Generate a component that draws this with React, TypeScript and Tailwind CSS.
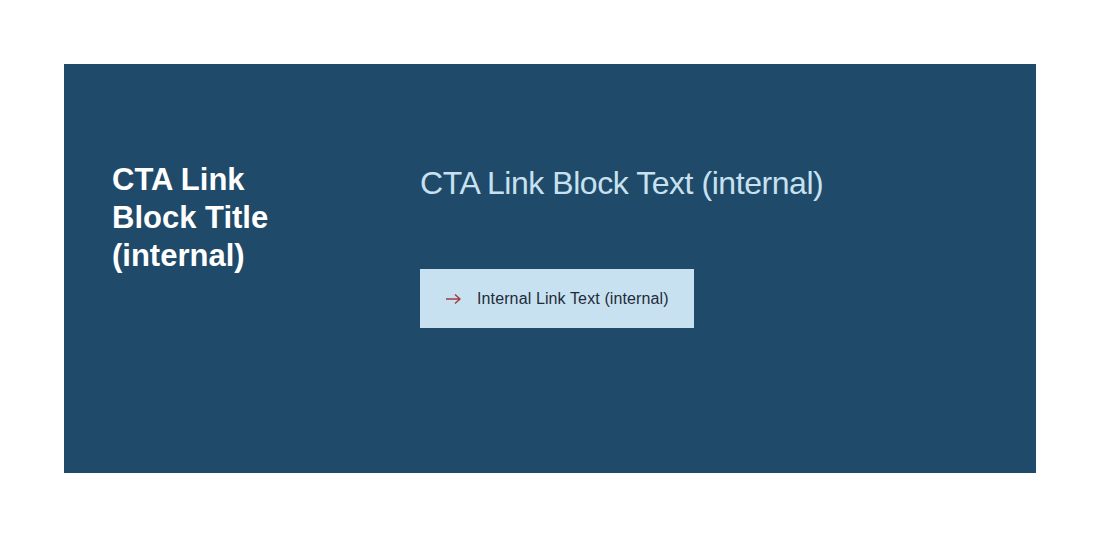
import React from "react";

export default function App() {
  return (
    <div className="w-[1100px] h-[537px] bg-white pt-[64px] pl-[64px]" style={{ fontFamily: '"Liberation Sans", Arial, sans-serif' }}>
      <div className="w-[972px] h-[409px] bg-[#1f4a69] flex pl-[48px] pt-[97px]">
        <div className="w-[308px] shrink-0">
          <h2 className="text-[31px] leading-[38px] font-bold text-white w-[200px]">
            CTA Link Block Title (internal)
          </h2>
        </div>
        <div className="flex flex-col">
          <p className="text-[32px] leading-[40px] text-[#c8e1f0] tracking-[-0.45px] mt-[2px]">
            CTA Link Block Text (internal)
          </p>
          <a href="#" className="mt-[66px] w-[274px] h-[59px] bg-[#c8e1f0] flex items-center pl-[25px] text-[16px] tracking-[0.12px] text-[#1e2b3a]">
            <svg width="16" height="12" viewBox="0 0 16 12" fill="none" stroke="#a33a3c" strokeWidth="1.4" className="mr-[16px]">
              <path d="M1 6h14M10 1.5L15 6l-5 4.5" />
            </svg>
            Internal Link Text (internal)
          </a>
        </div>
      </div>
    </div>
  );
}
